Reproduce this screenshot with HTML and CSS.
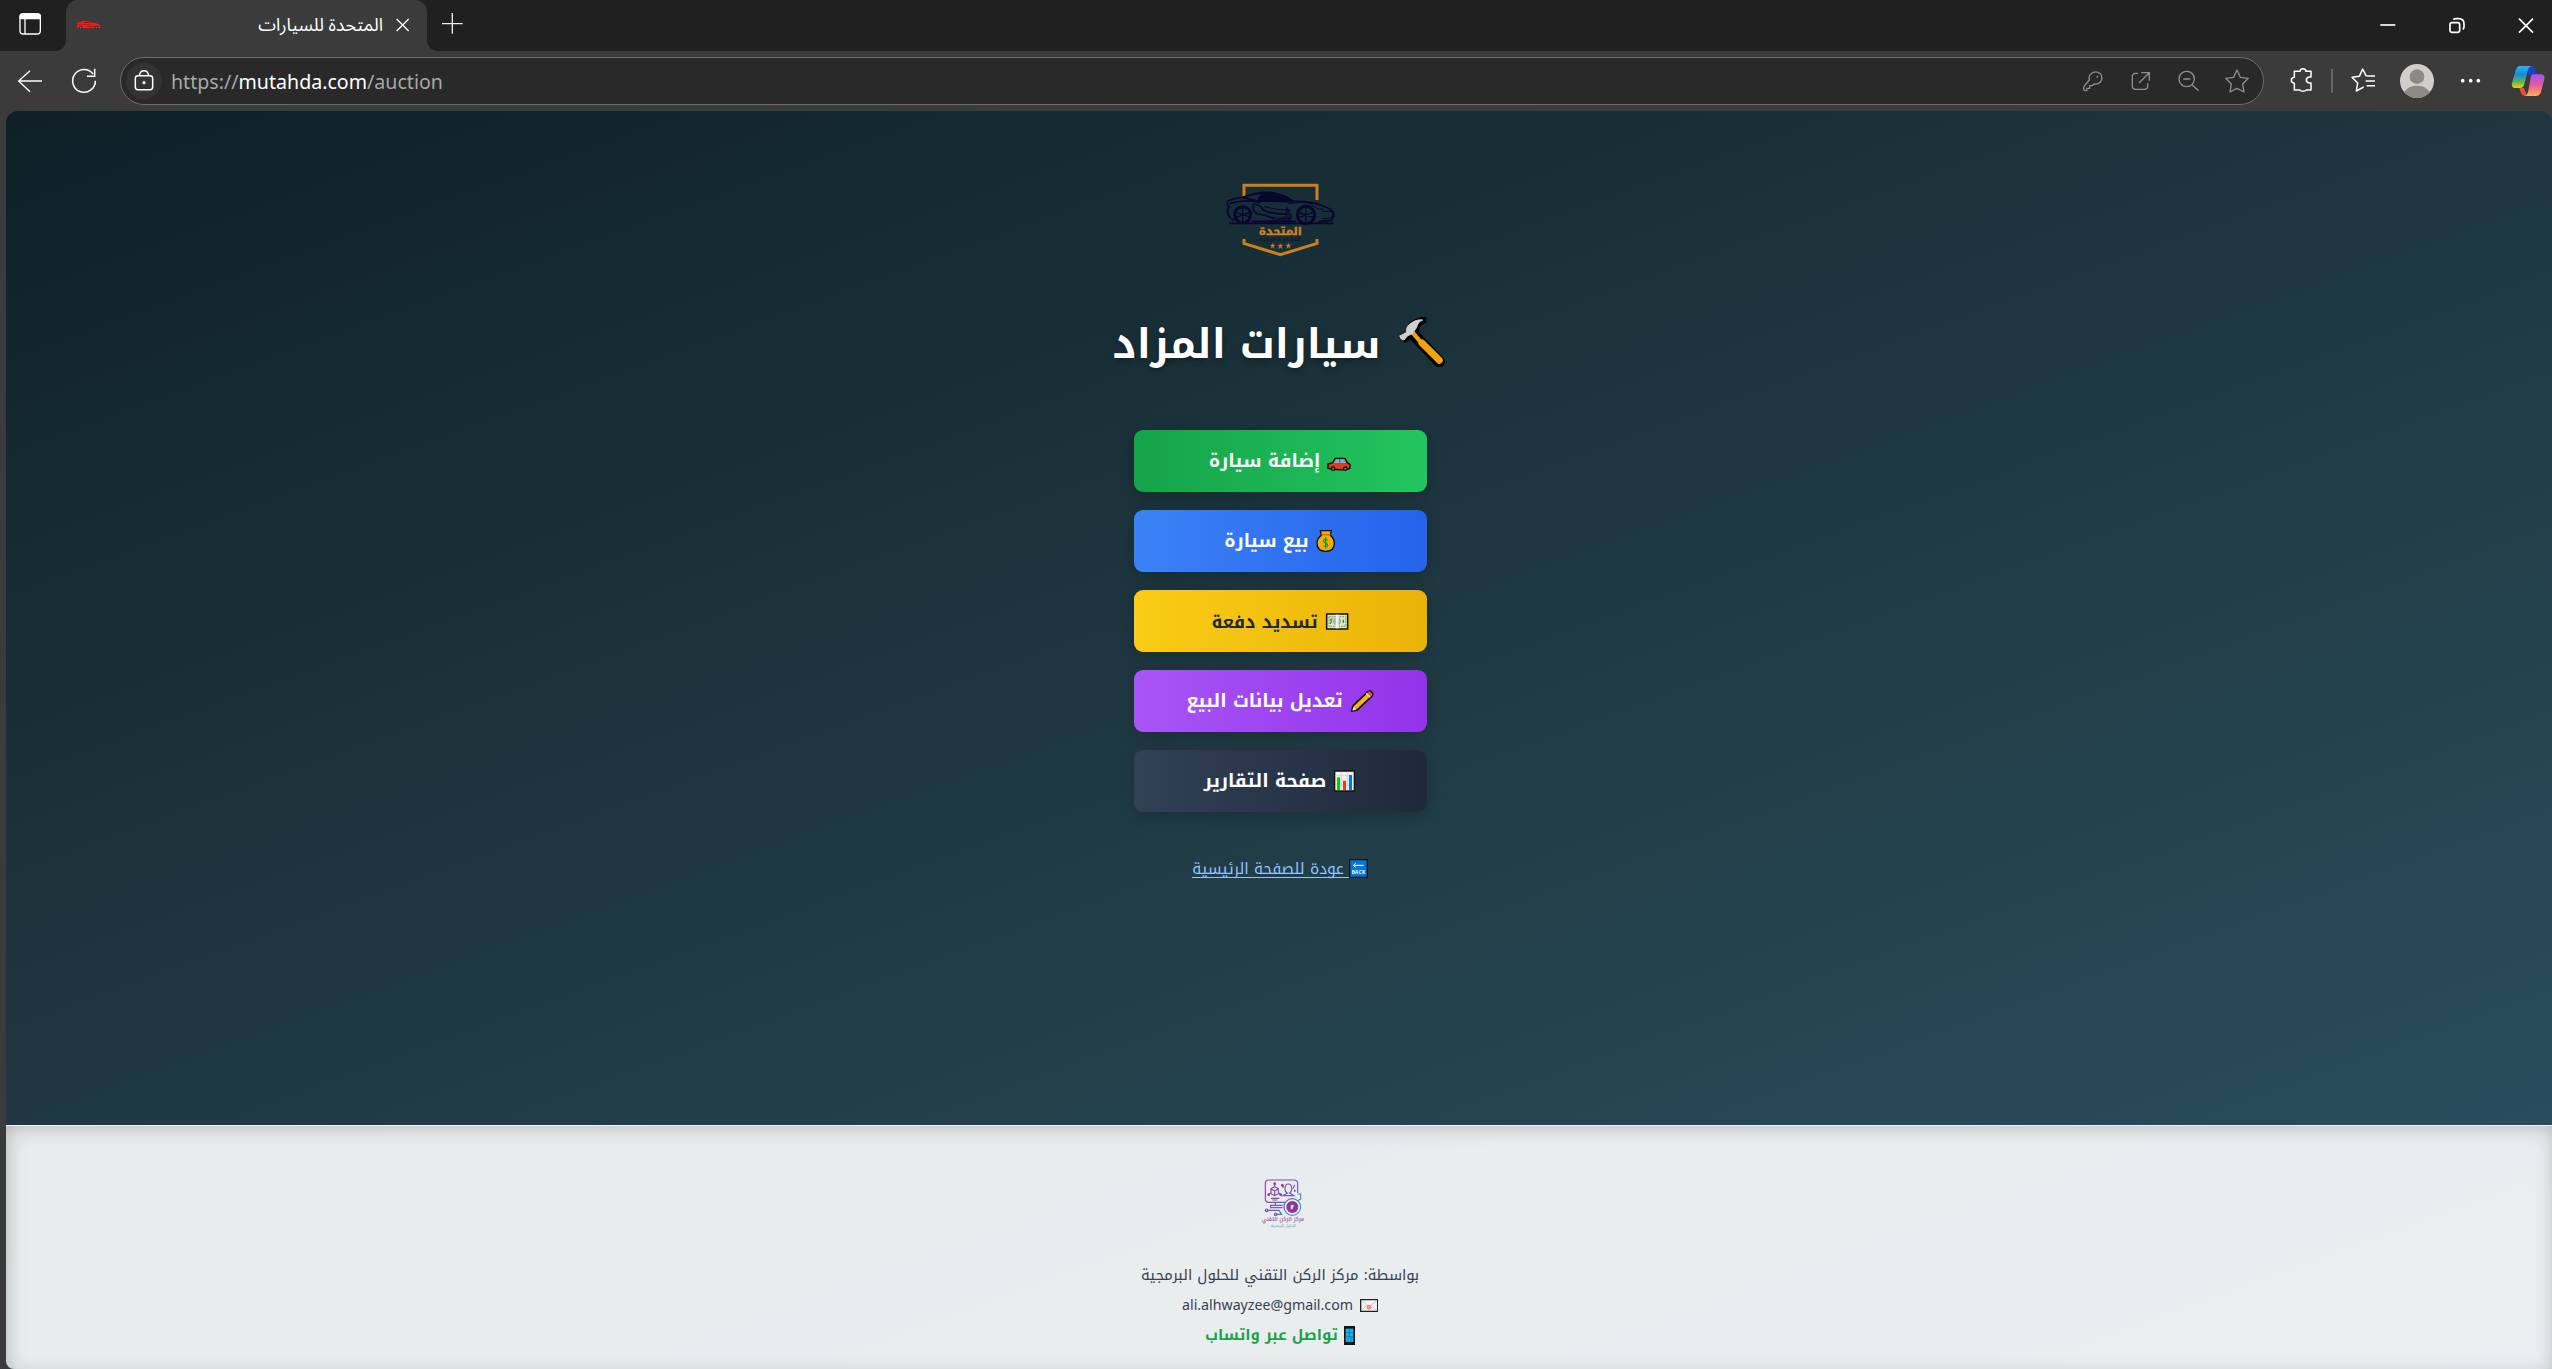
FILE: index.html
```
<!DOCTYPE html>
<html lang="ar">
<head>
<meta charset="utf-8">
<title>المتحدة للسيارات</title>
<link rel="stylesheet" href="styles.css">
</head>
<body>
<div class="browser">
  <header class="tabstrip">
    <svg class="panel-btn" viewBox="0 0 198 153" width="66" height="51" fill="none" stroke="#fff" stroke-width="4"><rect x="60" y="42" width="61" height="60" rx="10"/><path d="M60 56V50q0-8 8-8h45q8 0 8 8v6z" fill="#fff"/><path d="M75 56v46"/></svg>
    <div class="tab">
      <svg class="favicon" viewBox="228 52 78 36" width="26" height="12"><path d="M231 64q10-3 17-6 16-3 28 5 20 1 26 10l-3 6-66 1q-3-8-2-16z" fill="#e3231b"/><path d="M249 63q10-6 23 0z" fill="#6b1512"/><path d="M231 69h40M262 74h38" stroke="#9c1511" stroke-width="2"/><circle cx="242" cy="78" r="5" fill="#2c2f2a"/><circle cx="289" cy="78" r="5" fill="#2c2f2a"/><circle cx="242" cy="78" r="2" fill="#8a9a7a"/><circle cx="289" cy="78" r="2" fill="#8a9a7a"/></svg>
      <span class="tab-title" dir="rtl">المتحدة للسيارات</span>
      <svg viewBox="1185 51 48 48" width="16" height="16" fill="none" stroke="#fff" stroke-width="4"><path d="M1190 57l36 36M1226 57l-36 36"/></svg>
    </div>
    <svg class="new-tab" viewBox="1320 36 75 72" width="25" height="24" fill="none" stroke="#eee" stroke-width="4"><path d="M1326 71h62M1357 39v62"/></svg>
    <div class="window-btns">
      <svg viewBox="950 45 66 60" width="22" height="20"><path d="M960 75h45" stroke="#fff" stroke-width="5"/></svg>
      <svg viewBox="1158 45 66 60" width="22" height="20" fill="none" stroke="#fff" stroke-width="5"><rect x="1170" y="68" width="29" height="29" rx="6"/><path d="M1180 59q3-3 8-3h8q16 0 16 16v8q0 5-4 8"/></svg>
      <svg viewBox="1366 45 66 60" width="22" height="20" fill="none" stroke="#fff" stroke-width="5"><path d="M1378 56l42 42M1420 56l-42 42"/></svg>
    </div>
  </header>

  <nav class="toolbar">
    <svg viewBox="48 201 84 78" width="28" height="26" fill="none" stroke="#fff" stroke-width="4"><path d="M126 240H56M90 209L56 240l34 32"/></svg>
    <svg class="reload" viewBox="210 201 84 84" width="28" height="28" fill="none" stroke="#fff" stroke-width="4.5"><path d="M279 222a34 34 0 1 0 7 20M284 206v23h-23"/></svg>
    <div class="address">
      <svg class="lock" viewBox="378 189 108 108" width="36" height="36" fill="none" stroke="#fff" stroke-width="4.5"><circle cx="432" cy="243" r="54" fill="#333" stroke="none"/><rect x="406" y="227" width="52" height="42" rx="8"/><path d="M419 227v-4q2-11 13-11t13 11v4"/><circle cx="432" cy="248" r="2.5" fill="#fff"/></svg>
      <span class="url">https://<b>mutahda.com</b>/auction</span>
      <div class="address-icons">
        <svg viewBox="60 204 78 78" width="26" height="26" fill="none" stroke="#8f8f8f" stroke-width="4"><path d="M88 240q-3-14 8-21 14-8 25 2 9 12 1 24-9 9-20 7l-5 5h-8v8h-8l-1 7q-11 0-9-9 0-4 17-23z"/><circle cx="112" cy="230" r="3" fill="#8f8f8f" stroke="none"/></svg>
        <svg viewBox="205 204 78 78" width="26" height="26" fill="none" stroke="#8f8f8f" stroke-width="4"><path d="M235 220h-7q-10 0-10 10v28q0 10 10 10h26q10 0 10-10v-8M245 218h24v24M268 219l-30 30"/></svg>
        <svg viewBox="349 204 78 78" width="26" height="26" fill="none" stroke="#8f8f8f" stroke-width="4"><circle cx="381" cy="237" r="23"/><path d="M371 237h21M397 254l20 18"/></svg>
        <svg viewBox="492 204 78 78" width="26" height="26" fill="none" stroke="#8f8f8f" stroke-width="4" stroke-linejoin="round"><path d="M531 210l10 22 24 3-17 17 4 24-21-11-21 11 4-24-17-17 24-3z"/></svg>
      </div>
    </div>
    <div class="actions">
      <svg viewBox="684 204 84 84" width="28" height="28" fill="none" stroke="#fff" stroke-width="4.5" stroke-linejoin="round"><path d="M703 217h17q1-8 9-8t9 8h15v17h-5q-9 1-9 9t9 9h5v21h-15q-2 4-9 4t-9-4h-17v-20q-9-1-9-9t9-9z"/></svg>
      <i class="divider"></i>
      <svg viewBox="867 204 84 84" width="28" height="28" fill="none" stroke="#fff" stroke-width="4.5" stroke-linejoin="round"><path d="M932 231l-14-1-10-20-10 22-22 3 17 17-4 24 22-12M920 231h25M917 246h28M920 260h25"/></svg>
      <svg class="avatar" viewBox="1020 192 102 102" width="34" height="34"><defs><clipPath id="av"><circle cx="1071" cy="243" r="51"/></clipPath></defs><g clip-path="url(#av)"><path fill="#d0ceca" d="M1020 192h102v102h-102z"/><circle cx="1071" cy="230" r="22" fill="#8d8985"/><ellipse cx="1071" cy="290" rx="42" ry="33" fill="#8d8985"/></g></svg>
      <svg viewBox="1194 204 75 84" width="25" height="28" fill="#fff"><circle cx="1208" cy="245" r="5.5"/><circle cx="1232" cy="245" r="5.5"/><circle cx="1255" cy="245" r="5.5"/></svg>
      <svg class="copilot" viewBox="1353 195 105 96" width="35" height="32"><defs>
        <linearGradient id="cpa" x1="0" y1="0" x2="0" y2="1"><stop offset="0" stop-color="#29b6f0"/><stop offset=".4" stop-color="#158ad8"/><stop offset=".75" stop-color="#6cb84a"/><stop offset="1" stop-color="#f5d10e"/></linearGradient>
        <linearGradient id="cpb" x1="0" y1="0" x2="0" y2="1"><stop offset="0" stop-color="#a453f0"/><stop offset=".5" stop-color="#e85a9c"/><stop offset="1" stop-color="#ffb057"/></linearGradient></defs>
        <path d="M1402 198h12q8 0 11 9l5 16h-12q-9 0-11 9z" fill="#1746c4"/><path d="M1378 264h14l9 24q-14 1-18-9z" fill="#f0502f"/>
        <path d="M1380 198h34q-8 2-10 11l-11 44q-3 11-13 11h-16q-11-1-8-15l11-38q4-13 13-13z" fill="url(#cpa)"/><path d="M1419 223h24q13 1 10 15l-10 37q-4 13-16 13h-33q7-2 10-11l8-43q1-10 7-11z" fill="url(#cpb)"/></svg>
    </div>
  </nav>

  <div class="page" dir="rtl">
    <main class="hero">
      <svg class="logo" viewBox="0 0 480 300" width="160" height="100">
        <path d="M132 78V46h219v44M132 207v13l109 34 110-34v-13" fill="none" stroke="#c9801d" stroke-width="9"/>
        <g fill="none" stroke="#06062e" stroke-width="5" stroke-linejoin="round">
          <path d="M84 92q20-8 45-10 38-17 80-15 39 5 72 27 50-2 88 14 32 10 33 28l-7 15-40 4M84 92q-5 12 4 19l-6 9q1 23 20 31M156 154h132M130 83l40 9 110 3M90 100q50-14 90-2M160 102q-3 30 20 31 24 3 42 14M160 102q22 2 28 16 12 12 70 14M140 80q20-10 55-10M88 160h312"/>
          <path d="M205 69q46 2 74 25h-44q-14-12-30-25zM176 84q10-13 30-14l26 22-56 1z" fill="#06062e"/><path d="M265 101q40-8 75 0M325 99l30 18h15M345 97l30 15M366 124h34l-6 20-28 3M216 143l54 4M192 110q40 12 80 10M186 118q30 16 75 15" stroke-width="3"/>
          <path d="M258 106l20 32-8 17-80-2q40-1 66-16z" fill="#06062e" fill-opacity=".65" stroke="none"/>
          <circle cx="128" cy="134" r="24" stroke-width="9"/><circle cx="318" cy="135" r="26" stroke-width="9"/><path d="M128 114v40M109 128l38 12M109 142l38-14M318 114v42M298 128l40 14M298 142l40-14" stroke-width="4"/>
        </g>
        <text class="logo-name" x="241" y="195" text-anchor="middle" textLength="130" lengthAdjust="spacingAndGlyphs">المتحدة</text>
        <text class="logo-sub" x="241" y="214" text-anchor="middle" textLength="120" lengthAdjust="spacingAndGlyphs">للمزادات الأمريكية</text>
        <path id="st" d="M241 221l2 5h5l-4 4 2 6-5-4-5 4 2-6-4-4h5z" fill="#c9801d" stroke="#c9801d"/><use href="#st" x="-23" y="-1"/><use href="#st" x="24" y="-1"/>
      </svg>

      <h1 class="title">
        <svg viewBox="915 50 150 150" width="50" height="50" stroke-linejoin="round" stroke-linecap="round"><path d="M962 100l80 84" stroke="#000" stroke-width="34"/><path d="M930 107l20-10q-2-24 18-34 14-8 30-8v8q-17 7-20 18 0 15-19 27l-19 13z" fill="#000" stroke="#000" stroke-width="11"/><path d="M962 97l25 29" stroke="#f0a30a" stroke-width="13"/><path d="M990 128l52 52" stroke="#f0a30a" stroke-width="21"/><path d="M924 107l20-11q-2-16 9-24 19-16 39-13-16 7-18 22l-12 18-16 8-10 12q-12-1-12-12z" fill="#d0d0d0" stroke="#d0d0d0" stroke-width="3"/></svg>
        <span>سيارات المزاد</span>
      </h1>

      <div class="menu">
        <a class="btn green"><svg viewBox="621 111 72 45" width="24" height="15"><path d="M624 142v-10l14-4 7-13h30l7 13 8 5v12q-20 9-66 0z" fill="#e03a24" stroke="#111" stroke-width="4"/><path d="M642 129l6-11h9v11zM661 118h11l6 11h-17z" fill="#46c8f5"/><g fill="#888" stroke="#111" stroke-width="4"><circle cx="639" cy="146" r="5"/><circle cx="676" cy="146" r="5"/></g></svg><span class="t-add">إضافة سيارة</span></a>
        <a class="btn blue"><svg viewBox="588 324 60 72" width="20" height="24" stroke="#111" stroke-width="4"><path d="M601 329h33l-3 14q12 10 12 24 0 24-26 24t-26-24q0-15 13-24z" fill="#f5ac0a"/><path d="M604 341h28" stroke="#b96d08"/><path d="M623 357q-12-6-12 2 0 5 6 7t6 7q0 7-13 2M617 349v34" fill="none" stroke="#16a016" stroke-width="4"/></svg><span class="t-sell">بيع سيارة</span></a>
        <a class="btn yellow"><svg viewBox="612 573 72 57" width="24" height="19"><path d="M617 579h63v45h-63z" fill="#dfe8b8" stroke="#111" stroke-width="4.5"/><path d="M624 587h50v29h-50z" fill="none" stroke="#789568" stroke-width="3" stroke-dasharray="5 3"/><circle cx="648" cy="601" r="12" fill="#aaa"/><path d="M644 581h9v41h-9z" fill="#eee"/><path d="M634 594q-7 0-4 5t-2 9M667 596v9" stroke="#15931d" stroke-width="4" fill="none"/></svg><span class="t-pay">تسديد دفعة</span></a>
        <a class="btn purple"><svg viewBox="688 84 73 72" width="24" height="24" stroke-linejoin="round" stroke-linecap="round"><path d="M693 151l4-16 44-42q7-7 13 0t0 13l-44 41z" fill="#fbb40d" stroke="#111" stroke-width="5"/><path d="M695 150l4-12 8 8z" fill="#eee"/><path d="M739 98l9 9" stroke="#ddd" stroke-width="5"/><path d="M746 95l5 5" stroke="#e64b48" stroke-width="9"/></svg><span class="t-edit">تعديل بيانات البيع</span></a>
        <a class="btn dark"><svg viewBox="636 324 69 72" width="23" height="24"><path d="M641 330h59v60h-59z" fill="#f2f2f2" stroke="#111" stroke-width="4"/><path d="M643 344h55M643 359h55M643 374h55M661 332v56M680 332v56" stroke="#ccc" stroke-width="2"/><path d="M648 349h9v38h-9z" fill="#16c60c"/><path d="M666 360h9v27h-9z" fill="#f03a17"/><path d="M684 342h9v45h-9z" fill="#0078d7"/></svg><span class="t-report">صفحة التقارير</span></a>
      </div>

      <a class="back"><svg viewBox="684 597 57 57" width="19" height="19"><path d="M686 599h53v53h-53z" fill="#0078d7" stroke="#111" stroke-width="4"/><path d="M728 616h-28M704 610l-7 6 7 6" fill="none" stroke="#fff" stroke-width="3"/><text class="back-label" x="712" y="642" text-anchor="middle" textLength="40" direction="ltr">BACK</text></svg><span class="t-back">عودة للصفحة الرئيسية</span></a>
    </main>

    <footer class="footer">
      <svg class="vendor" viewBox="0 0 180 192" width="60" height="64" fill="none" stroke-width="3.5"><defs><linearGradient id="vg" gradientUnits="userSpaceOnUse" x1="45" y1="40" x2="155" y2="125"><stop offset="0" stop-color="#a33c9e"/><stop offset=".6" stop-color="#6862b5"/><stop offset="1" stop-color="#35a8d8"/></linearGradient></defs>
        <g stroke="url(#vg)"><path d="M106 97H56q-10 0-10-10V40q0-10 10-10h75q12 0 12 10v29M63 85h25M67 90h15M143 72h9v15l-8 5M76 97v9M50 121h37l8 12M77 133h20M64 106h34M64 113h34M64 104q-5 5 0 11"/><circle cx="50" cy="121" r="4"/><circle cx="77" cy="133" r="4"/><circle cx="127" cy="111" r="25"/><path d="M74 50l11 6v15l-11 6-11-6V56zM63 56l11 7 11-7M74 63v14M74 40v11M62 69l-6 5M86 69l6 5M105 56q0-14 10-14t10 14q0 9-6 13l13 8H99l13-8q-7-3-7-13M97 43l3 11M134 44l-5 12"/></g>
        <g fill="#8b379d"><circle cx="74" cy="41" r="4"/><circle cx="56" cy="74" r="4"/><circle cx="92" cy="74" r="4"/><circle cx="97" cy="46" r="4"/><circle cx="134" cy="62" r="3"/><circle cx="127" cy="111" r="18"/></g><path d="M122 118v-11q5-6 10 0l-5 11z" fill="#e6d7ec"/>
        <text class="vendor-name" x="99" y="154" text-anchor="middle" textLength="126" lengthAdjust="spacingAndGlyphs">مركز الركن التقني</text>
        <text class="vendor-sub" x="100" y="171" text-anchor="middle" textLength="75" lengthAdjust="spacingAndGlyphs">للحلول البرمجية</text>
      </svg>
      <p class="line"><span class="t-by">بواسطة: مركز الركن التقني للحلول البرمجية</span></p>
      <p class="line mail"><svg viewBox="717 594 54 39" width="18" height="13"><path d="M719 596h51v35h-51z" fill="#f2f2f2" stroke="#222" stroke-width="4"/><path d="M722 599l23 18 23-18M722 628l16-16M767 628l-16-16" fill="none" stroke="#bbb" stroke-width="2"/><circle cx="744" cy="619" r="7" fill="#f07860"/><circle cx="744" cy="619" r="3" fill="none" stroke="#fff"/></svg><span class="t-mail" dir="ltr">ali.alhwayzee@gmail.com</span></p>
      <p class="line whatsapp"><svg viewBox="672 675 33 57" width="11" height="19"><path d="M672 675h33v57h-33z" fill="#151515"/><path d="M677 683h23v40h-23z" fill="#18b4ee"/><path d="M677 695h23M677 707h23M688 683v24M684 707v16M693 707v16" stroke="#176b91" stroke-width="2"/></svg><span class="t-wa">تواصل عبر واتساب</span></p>
    </footer>
  </div>
</div>
</body>
</html>
```
FILE: styles.css
```
* { box-sizing: border-box; }
body { margin: 0; background: #3b3b3b; font-family: "Noto Kufi Arabic", "Noto Sans", sans-serif; }
svg { display: block; flex: none; }
.browser { width: 2552px; height: 1369px; overflow: hidden; display: flex; flex-direction: column; }

/* tab strip */
.tabstrip { height: 51px; flex: none; display: flex; background: #202020; }
.tab { position: relative; width: 361px; display: flex; align-items: center; padding: 0 16px 2px 10px; background: #3b3b3b; border-radius: 12px 12px 0 0; }
.tab::before, .tab::after { content: ""; position: absolute; bottom: 0; width: 10px; height: 10px; }
.tab::before { left: -10px; background: radial-gradient(circle at 0 0, transparent 9.5px, #3b3b3b 10px); }
.tab::after { right: -10px; background: radial-gradient(circle at 100% 0, transparent 9.5px, #3b3b3b 10px); }
.tab-title { flex: 1; padding-right: 12px; color: #fff; font: 18px/32px "Noto Sans Arabic", "Noto Sans", sans-serif; }
.new-tab { margin: 12px 0 0 13px; }
.window-btns { margin: 15px 15px 0 auto; display: flex; gap: 47px; }

/* toolbar */
.toolbar { height: 60px; flex: none; display: flex; align-items: center; padding: 0 6px 0 16px; }
.reload { margin-left: 26px; }
.address { width: 2144px; height: 48px; margin-left: 22px; display: flex; align-items: center; padding: 0 13px 0 5px; background: #292929; border: 1px solid #6c6c6c; border-radius: 24px; }
.url { margin: 2px 0 0 9px; color: #a8a8a8; font: 19.6px/30px "Noto Sans", sans-serif; }
.url b { color: #fff; font-weight: 400; }
.address-icons { margin-left: auto; display: flex; gap: 22px; }
.actions { flex: 1; display: flex; align-items: center; margin-left: 24px; }
.divider { width: 2px; height: 24px; margin: 0 16px 0 15px; background: #646464; }
.avatar { margin-left: 23px; }
.actions svg:nth-of-type(4) { margin-left: 24px; }
.copilot { margin-left: auto; }

/* page */
.page { flex: 1; margin-left: 6px; display: flex; flex-direction: column; overflow: hidden; border-radius: 12px 12px 0 8px; background: linear-gradient(160deg, #0f2027, #203a43 50%, #2c5364); }
.hero { height: 1014px; flex: none; display: flex; flex-direction: column; align-items: center; padding: 59px 0 0 3px; }
.logo { margin-right: 2px; }
.logo-name { font: 800 32px "Noto Kufi Arabic", sans-serif; fill: #c9801d; stroke: #c9801d; }
.logo-sub { font: 14px "Noto Kufi Arabic", sans-serif; fill: #06062e; }
.title { height: 90px; margin: 30px 2px 0 0; display: flex; align-items: center; gap: 16px; color: #fff; font-size: 40.6px; line-height: 90px; text-shadow: 0 2px 6px rgba(0, 0, 0, .4); }
.title svg { margin-bottom: 7px; }
.menu { width: 293px; margin-top: 40px; display: grid; gap: 18px; }
.btn { height: 62px; display: flex; align-items: center; justify-content: center; gap: 7px; padding-right: 1px; border-radius: 9px; color: #fff; font-weight: 700; font-size: 18px; line-height: 62px; box-shadow: 0 4px 15px rgba(0, 0, 0, .2); }
.green { background: linear-gradient(90deg, #16a34a, #22c55e); }
.blue { background: linear-gradient(90deg, #3b82f6, #2563eb); }
.yellow { background: linear-gradient(90deg, #facc15, #eab308); color: #1f2937; }
.purple { background: linear-gradient(90deg, #a855f7, #9333ea); }
.dark { background: linear-gradient(90deg, #334155, #1e293b); }
.green svg { margin-top: 7px; }
.t-add { font-size: 18.3px; }
.t-sell { font-size: 18.1px; }
.t-pay { font-size: 17.7px; position: relative; top: 1px; }
.t-edit, .t-report { font-size: 18.4px; }
.back { height: 36px; margin: 38px 1px 0 0; display: flex; align-items: center; gap: 5px; color: #93c5fd; font-size: 15.5px; line-height: 36px; background: linear-gradient(currentColor, currentColor) 0 27px / 100% 1px no-repeat; }
.t-back { padding-top: 1px; }
.back-label { font: 700 14px "Open Sans", sans-serif; fill: #fff; }

/* footer */
.footer { height: 252px; flex: none; display: flex; flex-direction: column; align-items: center; margin-left: 0; margin-right: -3px; padding-top: 44px; border-top: 1px solid #f0f3f5; background: rgba(255, 255, 255, .9); background-clip: padding-box; box-shadow: inset 0 0 20px rgba(0, 0, 0, .25); color: #374151; }
.vendor { margin: 0 1px 26px 0; }
.vendor-name { font: 600 17px "Noto Kufi Arabic", sans-serif; fill: #a65aa9; }
.vendor-sub { font: 10px "Noto Kufi Arabic", sans-serif; fill: #609bc2; }
.line { height: 30px; margin: 0 1px 0 0; display: flex; align-items: center; gap: 7px; line-height: 30px; }
.t-by { font-size: 14.9px; }
.t-mail { font: 14.2px/30px "Noto Sans", sans-serif; }
.whatsapp { gap: 6px; color: #16a34a; font-size: 15px; font-weight: 700; }
```
